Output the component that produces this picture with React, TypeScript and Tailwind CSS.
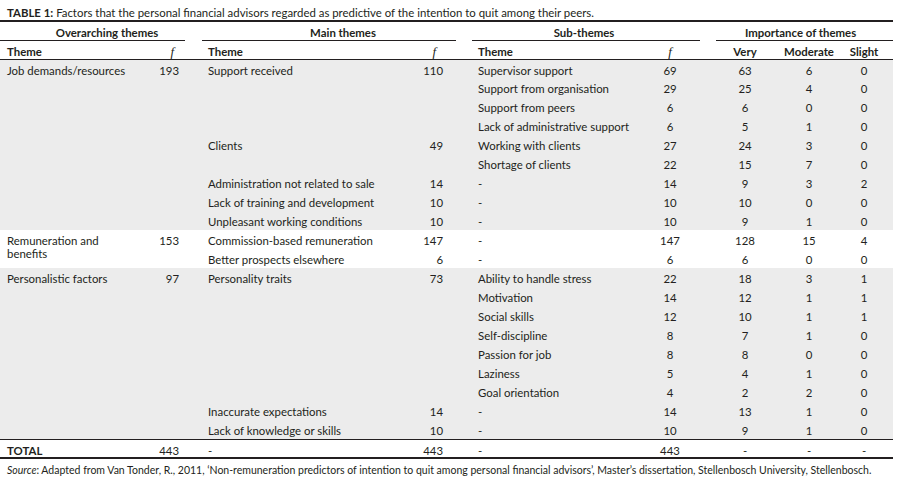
type Row = {
  over?: { label: React.ReactNode; f: string; span: number };
  main?: { label: string; f: string; span: number };
  sub: string;
  sf: string;
  very: string;
  mod: string;
  slight: string;
};

const groups: { bg: string; rows: Row[] }[] = [
  {
    bg: "bg-[#ececec]",
    rows: [
      { over: { label: "Job demands/resources", f: "193", span: 9 }, main: { label: "Support received", f: "110", span: 4 }, sub: "Supervisor support", sf: "69", very: "63", mod: "6", slight: "0" },
      { sub: "Support from organisation", sf: "29", very: "25", mod: "4", slight: "0" },
      { sub: "Support from peers", sf: "6", very: "6", mod: "0", slight: "0" },
      { sub: "Lack of administrative support", sf: "6", very: "5", mod: "1", slight: "0" },
      { main: { label: "Clients", f: "49", span: 2 }, sub: "Working with clients", sf: "27", very: "24", mod: "3", slight: "0" },
      { sub: "Shortage of clients", sf: "22", very: "15", mod: "7", slight: "0" },
      { main: { label: "Administration not related to sale", f: "14", span: 1 }, sub: "-", sf: "14", very: "9", mod: "3", slight: "2" },
      { main: { label: "Lack of training and development", f: "10", span: 1 }, sub: "-", sf: "10", very: "10", mod: "0", slight: "0" },
      { main: { label: "Unpleasant working conditions", f: "10", span: 1 }, sub: "-", sf: "10", very: "9", mod: "1", slight: "0" },
    ],
  },
  {
    bg: "bg-white",
    rows: [
      { over: { label: <>Remuneration and<br />benefits</>, f: "153", span: 2 }, main: { label: "Commission-based remuneration", f: "147", span: 1 }, sub: "-", sf: "147", very: "128", mod: "15", slight: "4" },
      { main: { label: "Better prospects elsewhere", f: "6", span: 1 }, sub: "-", sf: "6", very: "6", mod: "0", slight: "0" },
    ],
  },
  {
    bg: "bg-[#ececec]",
    rows: [
      { over: { label: "Personalistic factors", f: "97", span: 9 }, main: { label: "Personality traits", f: "73", span: 7 }, sub: "Ability to handle stress", sf: "22", very: "18", mod: "3", slight: "1" },
      { sub: "Motivation", sf: "14", very: "12", mod: "1", slight: "1" },
      { sub: "Social skills", sf: "12", very: "10", mod: "1", slight: "1" },
      { sub: "Self-discipline", sf: "8", very: "7", mod: "1", slight: "0" },
      { sub: "Passion for job", sf: "8", very: "8", mod: "0", slight: "0" },
      { sub: "Laziness", sf: "5", very: "4", mod: "1", slight: "0" },
      { sub: "Goal orientation", sf: "4", very: "2", mod: "2", slight: "0" },
      { main: { label: "Inaccurate expectations", f: "14", span: 1 }, sub: "-", sf: "14", very: "13", mod: "1", slight: "0" },
      { main: { label: "Lack of knowledge or skills", f: "10", span: 1 }, sub: "-", sf: "10", very: "9", mod: "1", slight: "0" },
    ],
  },
];

const td = "p-0 align-top pt-[4px] leading-[13px] h-[19px]";
const fItalic = "italic font-normal text-[13px] leading-[13px] [font-family:'Liberation_Serif',serif]";

export default function App() {
  return (
    <div className="w-[898px] h-[482px] bg-white text-[#231f20] text-[11.4px] [font-family:Lato,sans-serif]">
      <p className="pl-[7px] pt-[6px] h-[20px] leading-[13px] whitespace-nowrap">
        <span className="font-bold">TABLE 1:</span> Factors that the personal financial advisors regarded as predictive of the intention to quit among their peers.
      </p>
      <table className="table-fixed border-collapse w-[893px] border-t-2 border-t-[#231f20] border-b-2 border-b-[#231f20]">
        <colgroup>
          <col className="w-[150px]" />
          <col className="w-[35px]" />
          <col className="w-[17px]" />
          <col className="w-[218px]" />
          <col className="w-[36px]" />
          <col className="w-[16px]" />
          <col className="w-[168px]" />
          <col className="w-[60px]" />
          <col className="w-[16px]" />
          <col className="w-[58px]" />
          <col className="w-[70px]" />
          <col className="w-[49px]" />
        </colgroup>
        <thead className="font-bold">
          <tr>
            <th colSpan={2} className={`${td} text-center pl-[29px] border-b border-b-[#231f20] font-bold`}>Overarching themes</th>
            <th className={td}></th>
            <th colSpan={2} className={`${td} text-center pl-[28px] border-b border-b-[#231f20] font-bold`}>Main themes</th>
            <th className={td}></th>
            <th colSpan={2} className={`${td} text-center pr-[4px] border-b border-b-[#231f20] font-bold`}>Sub-themes</th>
            <th className={td}></th>
            <th colSpan={3} className={`${td} text-center pr-[8px] border-b border-b-[#231f20] font-bold`}>Importance of themes</th>
          </tr>
          <tr className="border-b border-b-[#231f20]">
            <th className={`${td} text-left pl-[7px] font-bold`}>Theme</th>
            <th className={`${td} text-right pr-[11px]`}><span className={fItalic}>f</span></th>
            <th className={td}></th>
            <th className={`${td} text-left pl-[6px] font-bold`}>Theme</th>
            <th className={`${td} text-right pr-[20px]`}><span className={fItalic}>f</span></th>
            <th className={td}></th>
            <th className={`${td} text-left pl-[6px] font-bold`}>Theme</th>
            <th className={`${td} text-center`}><span className={fItalic}>f</span></th>
            <th className={td}></th>
            <th className={`${td} text-center font-bold`}>Very</th>
            <th className={`${td} text-center font-bold`}>Moderate</th>
            <th className={`${td} text-center pr-[9px] font-bold`}>Slight</th>
          </tr>
        </thead>
        {groups.map((g, gi) => (
          <tbody key={gi} className={g.bg}>
            {g.rows.map((r, ri) => (
              <tr key={ri}>
                {r.over && (
                  <>
                    <td rowSpan={r.over.span} className={`${td} pl-[7px] leading-[12.5px]`}>{r.over.label}</td>
                    <td rowSpan={r.over.span} className={`${td} text-right pr-[6px]`}>{r.over.f}</td>
                    <td rowSpan={r.over.span} className={td}></td>
                  </>
                )}
                {r.main && (
                  <>
                    <td rowSpan={r.main.span} className={`${td} pl-[6px]`}>{r.main.label}</td>
                    <td rowSpan={r.main.span} className={`${td} text-right pr-[13px]`}>{r.main.f}</td>
                  </>
                )}
                <td className={td}></td>
                <td className={`${td} pl-[6px]`}>{r.sub}</td>
                <td className={`${td} text-center`}>{r.sf}</td>
                <td className={td}></td>
                <td className={`${td} text-center`}>{r.very}</td>
                <td className={`${td} text-center`}>{r.mod}</td>
                <td className={`${td} text-center pr-[9px]`}>{r.slight}</td>
              </tr>
            ))}
          </tbody>
        ))}
        <tbody className="border-t border-t-[#231f20]">
          <tr>
            <td className={`${td} pl-[7px] font-bold`}>TOTAL</td>
            <td className={`${td} text-right pr-[6px]`}>443</td>
            <td className={td}></td>
            <td className={`${td} pl-[6px]`}>-</td>
            <td className={`${td} text-right pr-[13px]`}>443</td>
            <td className={td}></td>
            <td className={`${td} pl-[6px]`}>-</td>
            <td className={`${td} text-center`}>443</td>
            <td className={td}></td>
            <td className={`${td} text-center`}>-</td>
            <td className={`${td} text-center`}>-</td>
            <td className={`${td} text-center pr-[9px]`}>-</td>
          </tr>
        </tbody>
      </table>
      <p className="pl-[7px] pt-[5px] text-[10.5px] leading-[12px] whitespace-nowrap">
        <span className="italic">Source</span>: Adapted from Van Tonder, R., 2011, ‘Non-remuneration predictors of intention to quit among personal financial advisors’, Master’s dissertation, Stellenbosch University, Stellenbosch.
      </p>
    </div>
  );
}
